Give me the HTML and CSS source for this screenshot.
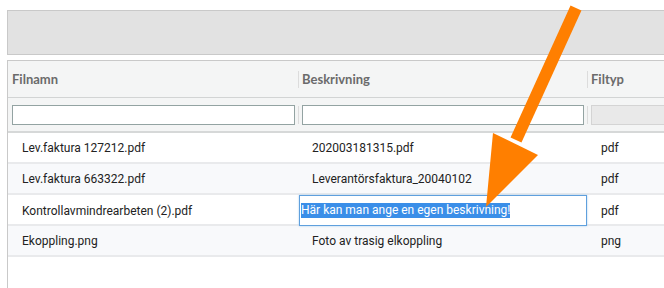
FILE: index.html
```html
<!DOCTYPE html>
<html lang="sv">
<head>
  <meta charset="UTF-8" />
  <title>Filer</title>
  <link rel="stylesheet" href="styles.css">
</head>
<body>

  <!-- Toolbar -->
  <div class="toolbar"></div>

  <!-- File grid -->
  <div class="grid">
    <div class="row head">
      <div class="hcell"><span class="label">Filnamn</span></div>
      <div class="hcell"><span class="label sep">Beskrivning</span></div>
      <div class="hcell"><span class="label sep">Filtyp</span></div>
    </div>

    <div class="row filters">
      <div class="fcell"><input class="filter" type="text"></div>
      <div class="fcell"><span class="bar"></span><input class="filter" type="text"></div>
      <div class="fcell last"><span class="bar"></span><input class="filter" type="text" disabled></div>
    </div>

    <div class="row">
      <div class="cell">Lev.faktura 127212.pdf</div>
      <div class="cell">202003181315.pdf</div>
      <div class="cell">pdf</div>
    </div>
    <div class="row alt">
      <div class="cell">Lev.faktura 663322.pdf</div>
      <div class="cell">Leverantörsfaktura_20040102</div>
      <div class="cell">pdf</div>
    </div>
    <div class="row">
      <div class="cell">Kontrollavmindrearbeten (2).pdf</div>
      <div class="cell editing">
        <div class="editor"><span class="selected">Här kan man ange en egen beskrivning!</span></div>
      </div>
      <div class="cell">pdf</div>
    </div>
    <div class="row alt">
      <div class="cell">Ekoppling.png</div>
      <div class="cell">Foto av trasig elkoppling</div>
      <div class="cell">png</div>
    </div>
  </div>

  <!-- Callout arrow -->
  <svg class="arrow" width="664" height="288" viewBox="0 0 664 288">
    <line x1="576" y1="8" x2="516" y2="140" stroke="#ff7f00" stroke-width="12" />
    <polygon points="493,133 538,155 486,207" fill="#ff7f00" />
  </svg>

</body>
</html>
```

FILE: styles.css
```css
html, body {
  margin: 0;
  height: 100%;
  overflow: hidden;
  background: #fff;
}

body {
  padding: 10px 0 0 7px;
  box-sizing: border-box;
  position: relative;
  font-family: Roboto, "Liberation Sans", sans-serif;
}

.toolbar {
  height: 43px;
  background: #e2e2e2;
  border: 1px solid #c9c9c9;
  border-right: none;
}

.grid {
  margin-top: 5px;
  height: 227px;
  border-top: 1px solid #c9c9c9;
  border-left: 1px solid #c9c9c9;
}

.row {
  display: grid;
  grid-template-columns: 290px 289px 1fr;
  height: 29px;
  border-bottom: 2px solid #e9eaec;
  background: #fff;
}

.row.alt {
  background: #f8f9fb;
}

/* Header */
.row.head {
  height: 36px;
  border-bottom: 1px solid #d2d4d4;
  background: #f4f5f5;
}

.hcell {
  display: flex;
  align-items: center;
}

.label {
  font-family: Lato, "Open Sans", sans-serif;
  font-weight: bold;
  font-size: 13px;
  color: #6b6b6b;
  padding-left: 4px;
  line-height: 17px;
}

.label.sep {
  border-left: 1px solid #dcdcdc;
  padding-left: 3px;
}

/* Filter row */
.row.filters {
  height: 33px;
  background: #f4f5f5;
  border-bottom: 2px solid #d6d8d8;
}

.fcell {
  display: flex;
  align-items: center;
  padding: 0 3px 0 4px;
}

.fcell.last {
  padding-right: 0;
}

.fcell .bar {
  width: 1px;
  height: 18px;
  background: #dcdcdc;
  margin: 0 3px 0 -4px;
}

.filter {
  flex: 1;
  min-width: 0;
  height: 20px;
  box-sizing: border-box;
  margin: 0;
  border: 1px solid #93a3a2;
  background: #fff;
  padding: 0 3px;
}

.fcell.last .filter {
  border-right: none;
}

.filter:disabled {
  background: #e9e9e9;
  border-color: #d4d4d4;
}

/* Data rows */
.cell {
  display: flex;
  align-items: center;
  padding-left: 14px;
  font-size: 12px;
  color: #222;
  white-space: nowrap;
}

.cell.editing {
  padding-left: 1px;
  align-items: stretch;
}

.editor {
  flex: 1;
  height: 31px;
  box-sizing: border-box;
  border: 1px solid #5fa0dd;
  box-shadow: 0 0 2px #a9cdf0;
  background: #fff;
  display: flex;
  align-items: center;
  padding-left: 1px;
}

.selected {
  background: #3a8ee8;
  color: #fff;
  line-height: 15px;
}

.arrow {
  position: absolute;
  top: 0;
  left: 0;
  pointer-events: none;
}
```
